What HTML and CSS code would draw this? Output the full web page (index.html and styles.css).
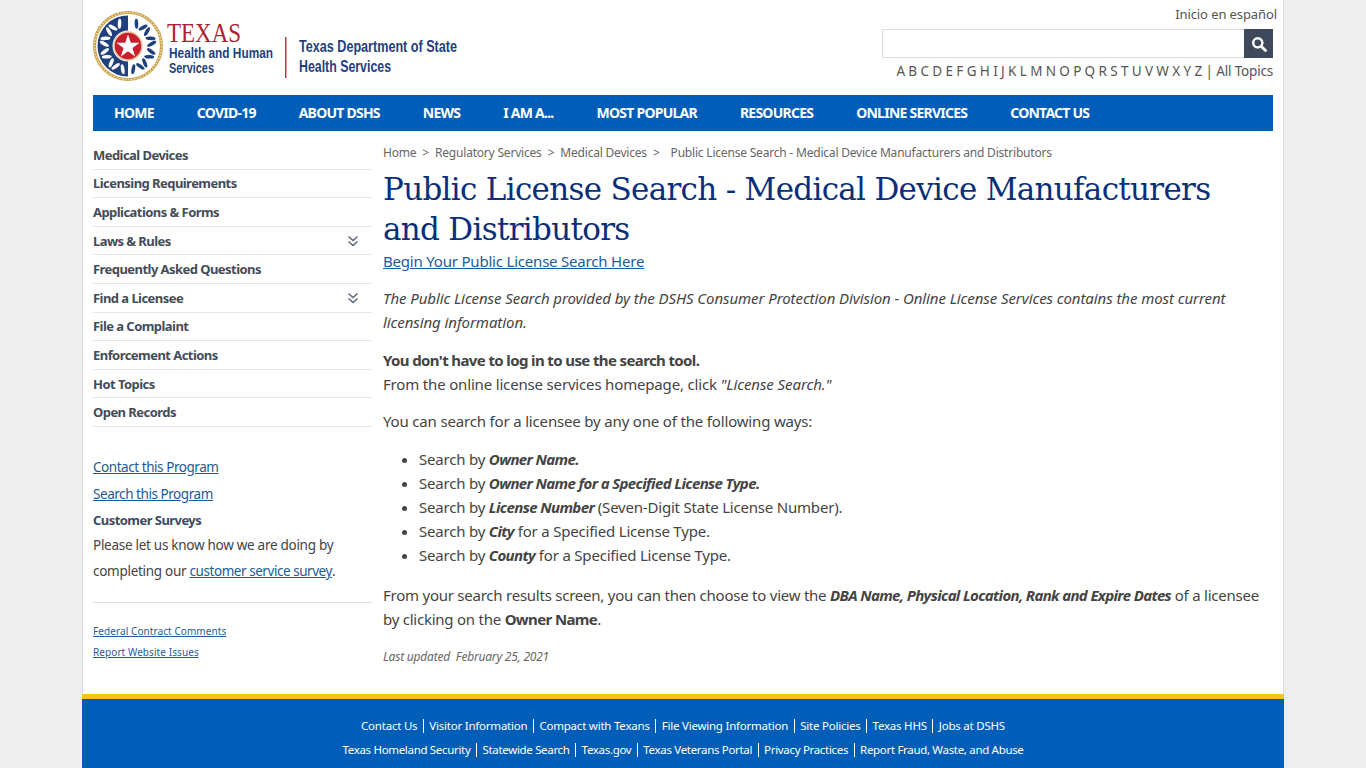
FILE: index.html
```html
<!DOCTYPE html>
<html lang="en">
<head>
<meta charset="utf-8">
<title>Public License Search - Medical Device Manufacturers and Distributors</title>
<link rel="stylesheet" href="styles.css">
</head>
<body>
<div class="page">
  <header class="header">
    <a class="logo" href="#" aria-label="Texas Health and Human Services">
      <svg width="370" height="80" viewBox="0 0 370 80">
        <defs>
          <g id="leafpair">
            <ellipse cx="-3.800" cy="-23.500" rx="1.800" ry="5" transform="rotate(-32 -3.800 -23.500)"/>
            <ellipse cx="3.800" cy="-23.500" rx="1.800" ry="5" transform="rotate(32 3.800 -23.500)"/>
          </g>
        </defs>
        <circle cx="35" cy="35" r="33.500" fill="none" stroke="#c9a24a" stroke-width="3"/>
        <circle cx="35" cy="35" r="33.500" fill="none" stroke="#f3e3b4" stroke-width="1.400" stroke-dasharray="1.400 1.600"/>
        <path d="M35 4.500A30.500 30.500 0 0 0 35 65.500Z" fill="#1f3f7d"/>
        <g fill="#fff" transform="translate(35 35)">
          <use href="#leafpair" transform="rotate(-30)"/>
          <use href="#leafpair" transform="rotate(-62)"/>
          <use href="#leafpair" transform="rotate(-94)"/>
          <use href="#leafpair" transform="rotate(-126)"/>
          <use href="#leafpair" transform="rotate(-158)"/>
        </g>
        <g fill="#1f3f7d" transform="translate(35 35)">
          <use href="#leafpair" transform="rotate(30)"/>
          <use href="#leafpair" transform="rotate(62)"/>
          <use href="#leafpair" transform="rotate(94)"/>
          <use href="#leafpair" transform="rotate(126)"/>
          <use href="#leafpair" transform="rotate(158)"/>
        </g>
        <circle cx="35" cy="35" r="15.500" fill="#fff"/>
        <circle cx="35" cy="35" r="14" fill="#c8202f" stroke="#e3c8a2" stroke-width="1.500"/>
        <path d="M35 23.500l2.800 8.300 8.700 0-7 5.200 2.600 8.400-7.100-5.100-7.100 5.100 2.600-8.400-7-5.200 8.700 0z" fill="#fff"/>
        <text x="74" y="31" class="logo-texas" textLength="74" lengthAdjust="spacingAndGlyphs">TEXAS</text>
        <text x="76" y="47" class="logo-hhs" textLength="104" lengthAdjust="spacingAndGlyphs">Health and Human</text>
        <text x="76" y="62" class="logo-hhs" textLength="45" lengthAdjust="spacingAndGlyphs">Services</text>
        <rect x="192" y="26" width="1.500" height="41" fill="#a8403f"/>
        <text x="206" y="41" class="logo-dshs" textLength="158" lengthAdjust="spacingAndGlyphs">Texas Department of State</text>
        <text x="206" y="61" class="logo-dshs" textLength="92" lengthAdjust="spacingAndGlyphs">Health Services</text>
      </svg>
    </a>
    <div class="tools">
      <a class="lang" href="#">Inicio en español</a>
      <form class="search">
        <input class="search-input" type="text" aria-label="Search">
        <button class="search-btn" type="button" aria-label="Search">
          <svg width="16" height="16" viewBox="0 0 16 16"><circle cx="6.800" cy="6.800" r="4.600" fill="none" stroke="#fff" stroke-width="2.400"/><path d="M10.200 10.200l4.300 4.300" stroke="#fff" stroke-width="2.800" stroke-linecap="round"/></svg>
        </button>
      </form>
      <div class="az">
        <a href="#">A</a> <a href="#">B</a> <a href="#">C</a> <a href="#">D</a> <a href="#">E</a> <a href="#">F</a> <a href="#">G</a> <a href="#">H</a> <a href="#">I</a> <a href="#">J</a> <a href="#">K</a> <a href="#">L</a> <a href="#">M</a> <a href="#">N</a> <a href="#">O</a> <a href="#">P</a> <a href="#">Q</a> <a href="#">R</a> <a href="#">S</a> <a href="#">T</a> <a href="#">U</a> <a href="#">V</a> <a href="#">W</a> <a href="#">X</a> <a href="#">Y</a> <a href="#">Z</a> | <a href="#">All Topics</a>
      </div>
    </div>
  </header>

  <nav class="nav">
    <a href="#">HOME</a><a href="#">COVID-19</a><a href="#">ABOUT DSHS</a><a href="#">NEWS</a><a href="#">I AM A...</a><a href="#">MOST POPULAR</a><a href="#">RESOURCES</a><a href="#">ONLINE SERVICES</a><a href="#">CONTACT US</a>
  </nav>

  <div class="columns">
    <aside class="side">
      <ul class="side-menu">
        <li><a href="#">Medical Devices</a></li>
        <li><a href="#">Licensing Requirements</a></li>
        <li><a href="#">Applications &amp; Forms</a></li>
        <li><a href="#">Laws &amp; Rules</a><svg class="chev" width="12" height="12" viewBox="0 0 12 12"><path d="M1.500 1.500L6 5.500l4.500-4M1.500 6.500L6 10.500l4.500-4" fill="none" stroke="#5c6673" stroke-width="1.500"/></svg></li>
        <li><a href="#">Frequently Asked Questions</a></li>
        <li><a href="#">Find a Licensee</a><svg class="chev" width="12" height="12" viewBox="0 0 12 12"><path d="M1.500 1.500L6 5.500l4.500-4M1.500 6.500L6 10.500l4.500-4" fill="none" stroke="#5c6673" stroke-width="1.500"/></svg></li>
        <li><a href="#">File a Complaint</a></li>
        <li><a href="#">Enforcement Actions</a></li>
        <li><a href="#">Hot Topics</a></li>
        <li><a href="#">Open Records</a></li>
      </ul>
      <div class="side-extra">
        <p class="side-link"><a href="#">Contact this Program</a></p>
        <p class="side-link"><a href="#">Search this Program</a></p>
        <p class="side-head">Customer Surveys</p>
        <p class="side-text">Please let us know how we are doing by</p>
        <p class="side-text">completing our <a href="#">customer service survey</a>.</p>
      </div>
      <div class="side-small">
        <p><a href="#">Federal Contract Comments</a></p>
        <p><a href="#">Report Website Issues</a></p>
      </div>
    </aside>
    <main class="main">
      <div class="crumbs"><a href="#">Home</a><span class="sep">&gt;</span><a href="#">Regulatory Services</a><span class="sep">&gt;</span><a href="#">Medical Devices</a><span class="sep last">&gt;</span><span>Public License Search - Medical Device Manufacturers and Distributors</span></div>
      <h1 class="title">Public License Search - Medical Device Manufacturers and Distributors</h1>
      <p class="begin"><a href="#">Begin Your Public License Search Here</a></p>
      <p class="para"><em>The Public License Search provided by the DSHS Consumer Protection Division - Online License Services contains the most current licensing information.</em></p>
      <p class="para"><strong>You don't have to log in to use the search tool.</strong><br>From the online license services homepage, click <em>"License Search."</em></p>
      <p class="para">You can search for a licensee by any one of the following ways:</p>
      <ul class="ways">
        <li>Search by <strong><em>Owner Name.</em></strong></li>
        <li>Search by <strong><em>Owner Name for a Specified License Type.</em></strong></li>
        <li>Search by <strong><em>License Number</em></strong> (Seven-Digit State License Number).</li>
        <li>Search by <strong><em>City</em></strong> for a Specified License Type.</li>
        <li>Search by <strong><em>County</em></strong> for a Specified License Type.</li>
      </ul>
      <p class="para para-tight">From your search results screen, you can then choose to view the <strong><em>DBA Name, Physical Location, Rank and Expire Dates</em></strong> of a licensee by clicking on the <strong>Owner Name</strong>.</p>
      <p class="updated"><em>Last updated&nbsp; February 25, 2021</em></p>
    </main>
  </div>

  <footer class="footer">
    <div class="foot-row"><a href="#">Contact Us</a><i></i><a href="#">Visitor Information</a><i></i><a href="#">Compact with Texans</a><i></i><a href="#">File Viewing Information</a><i></i><a href="#">Site Policies</a><i></i><a href="#">Texas HHS</a><i></i><a href="#">Jobs at DSHS</a></div>
    <div class="foot-row foot-row-tight"><a href="#">Texas Homeland Security</a><i></i><a href="#">Statewide Search</a><i></i><a href="#">Texas.gov</a><i></i><a href="#">Texas Veterans Portal</a><i></i><a href="#">Privacy Practices</a><i></i><a href="#">Report Fraud, Waste, and Abuse</a></div>
  </footer>
</div>
</body>
</html>
```

FILE: styles.css
```css
* { box-sizing: border-box; }
html, body { margin: 0; padding: 0; height: 100%; overflow: hidden; }
body {
  background: #eeeeee;
  color: #444444;
  font-family: "Noto Sans", "Liberation Sans", sans-serif;
  font-size: 15px;
  line-height: 24px;
}
a { color: inherit; text-decoration: none; }
p { margin: 0; }

.page {
  width: 1202px;
  height: 768px;
  margin: 0 auto;
  background: #fff;
  border-left: 1px solid #dcdcdc;
  border-right: 1px solid #dcdcdc;
  display: flex;
  flex-direction: column;
}

/* Header */
.header {
  height: 95px;
  padding: 0 6px 0 10px;
  display: flex;
  justify-content: space-between;
}
.logo { display: block; padding-top: 11px; height: 95px; }
.logo svg { display: block; }
.logo-texas { font-family: "Liberation Serif", serif; font-size: 28px; fill: #b1202c; }
.logo-hhs { font-family: "Liberation Sans Narrow", "Liberation Sans", sans-serif; font-weight: 700; font-size: 14.500px; fill: #1f3f7d; }
.logo-dshs { font-family: "Liberation Sans Narrow", "Liberation Sans", sans-serif; font-weight: 700; font-size: 16px; fill: #1f3f7d; }

.tools { display: flex; flex-direction: column; align-items: flex-end; width: 395px; }
.lang { font-size: 13px; line-height: 18px; margin-top: 5px; color: #555; letter-spacing: -0.100px; }
.search { display: flex; width: 391px; height: 29px; margin: 6px 4px 0 0; }
.search-input { flex: 1; height: 29px; margin: 0; padding: 0 6px; border: 1px solid #dddddd; border-right: 0; background: #fff; outline: 0; }
.search-btn { width: 29px; height: 29px; padding: 0; border: 0; background: #3e4a5b; display: flex; align-items: center; justify-content: center; }
.az { font-size: 13.500px; line-height: 20px; margin: 3px 4px 0 0; color: #555; word-spacing: 0.200px; letter-spacing: -0.200px; white-space: nowrap; }

/* Nav */
.nav {
  height: 36px;
  margin: 0 10px;
  background: #005eb8;
  display: flex;
  align-items: center;
  padding-left: 21px;
  gap: 43px;
  flex: none;
}
.nav a { color: #fff; font-weight: 700; font-size: 14px; letter-spacing: -0.760px; white-space: nowrap; }

/* Columns */
.columns { flex: 1; min-height: 0; display: flex; padding: 0 10px; gap: 11px; }
.side { width: 279px; flex: none; padding-top: 10px; }
.side-menu { list-style: none; margin: 0; padding: 0; }
.side-menu li {
  height: 28.600px;
  border-bottom: 1px solid #e6e6e6;
  display: flex;
  align-items: center;
  justify-content: space-between;
  padding-right: 13px;
  font-size: 13px;
  font-weight: 700;
  color: #444c58;
  letter-spacing: -0.550px;
}
.chev { display: block; }
.side-extra { margin-top: 27px; padding-bottom: 18px; border-bottom: 1px solid #dddddd; font-size: 13.500px; letter-spacing: -0.280px; }
.side-link { line-height: 27px; color: #1a5c96; letter-spacing: -0.450px; }
.side-link a, .side-text a, .side-small a, .begin a { text-decoration: underline; }
.side-head { line-height: 24px; font-size: 13px; font-weight: 700; color: #3c4a66; letter-spacing: -0.550px; }
.side-text { line-height: 26px; }
.side-text a { color: #1a5c96; letter-spacing: -0.450px; }
.side-small { margin-top: 18px; font-size: 10px; line-height: 21px; color: #2a5c9a; letter-spacing: 0.080px; }

/* Main */
.main { flex: 1; min-width: 0; padding-top: 10px; }
.crumbs { font-size: 12px; line-height: 24px; height: 24px; margin-bottom: 4px; color: #666; letter-spacing: -0.200px; white-space: nowrap; }
.sep { margin: 0 6px; }
.sep.last { margin-right: 11px; }
.title {
  margin: 0;
  padding-right: 50px;
  font-family: "DejaVu Serif", serif;
  font-weight: 400;
  font-size: 31px;
  line-height: 40px;
  color: #0a2f7a;
  letter-spacing: -0.700px;
}
.begin { color: #1a5c9c; line-height: 24px; letter-spacing: -0.200px; }
.para { line-height: 24px; margin-top: 13.500px; letter-spacing: -0.170px; }
.para-tight { letter-spacing: -0.240px; }
.para em { letter-spacing: -0.080px; }
.para strong { letter-spacing: -0.620px; }
.para strong em { letter-spacing: -0.650px; }
.begin + .para { margin-top: 13px; }
.ways { margin: 14px 0 0; padding-left: 36px; letter-spacing: -0.200px; }
.ways strong { letter-spacing: -0.620px; }
.ways + .para { margin-top: 16px; }
.updated { font-size: 12px; margin-top: 13.500px; color: #666; letter-spacing: -0.200px; }

/* Footer */
.footer {
  flex: none;
  height: 74px;
  background: #005eb8;
  border-top: 5px solid #f5c518;
  margin: 0 -1px;
  padding-top: 15px;
}
.foot-row { display: flex; justify-content: center; align-items: center; height: 24px; color: #fff; font-size: 11.500px; letter-spacing: -0.220px; }
.foot-row-tight { letter-spacing: -0.320px; }
.foot-row i { width: 1px; height: 14px; background: #fff; margin: 0 5.500px; }
```
